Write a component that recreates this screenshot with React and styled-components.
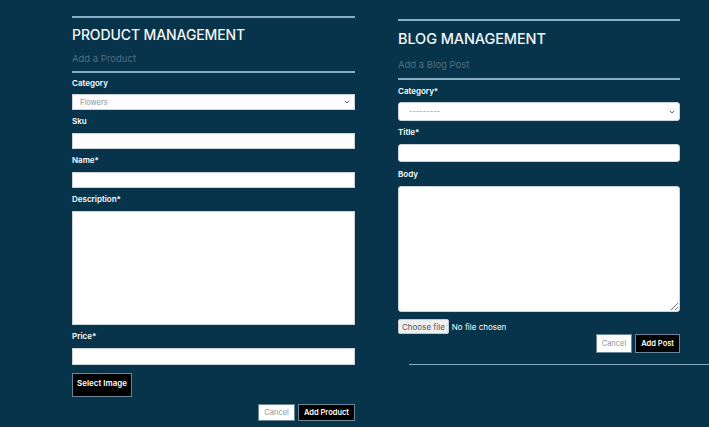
import React from "react";
import styled, { createGlobalStyle } from "styled-components";

const Global = createGlobalStyle`
  html, body { margin: 0; padding: 0; background: #07344a; }
  body { font-family: "Inter", "Noto Sans", sans-serif; color: #fff; }
  * { box-sizing: border-box; }
`;

const Page = styled.div`
  width: 709px;
  height: 427px;
  overflow: hidden;
  background: #07344a;
  display: flex;
  align-items: flex-start;
  gap: 43px;
  padding-left: 72px;
`;

const Column = styled.section`
  width: ${(p) => p.$w}px;
  padding-top: ${(p) => p.$top}px;
  display: flex;
  flex-direction: column;
`;

const Rule = styled.div`
  height: 2px;
  margin-top: ${(p) => p.$mt || 0}px;
  background: #86adc4;
`;

const Heading = styled.h2`
  margin: ${(p) => p.$m};
  font-size: ${(p) => p.$size}px;
  line-height: 20px;
  font-weight: 500;
  letter-spacing: -0.1px;
  color: #f4f7f9;
  text-transform: uppercase;
`;

const Sub = styled.p`
  margin: ${(p) => p.$m};
  font-size: 9.5px;
  line-height: 12px;
  color: #4e6f82;
`;

const Label = styled.label`
  display: block;
  padding: ${(p) => p.$pad || "6px 0 6px"};
  font-size: 8px;
  line-height: 11px;
  font-weight: 600;
  color: #fff;
`;

const Input = styled.input`
  display: block;
  width: 100%;
  height: ${(p) => p.$h}px;
  margin: 0;
  border: 1px solid #c9d3d9;
  border-radius: ${(p) => (p.$round ? "3px" : "0")};
  background: #fff;
  outline: none;
`;

const Area = styled.textarea`
  display: block;
  width: 100%;
  height: ${(p) => p.$h}px;
  margin: 0;
  border: 1px solid #c9d3d9;
  border-radius: ${(p) => (p.$round ? "3px" : "0")};
  background: #fff;
  resize: ${(p) => (p.$round ? "vertical" : "none")};
  outline: none;
`;

const SelectWrap = styled.div`
  position: relative;
  height: ${(p) => p.$h}px;
`;

const Select = styled.select`
  display: block;
  appearance: none;
  width: 100%;
  height: 100%;
  margin: 0;
  padding: 0 0 0 ${(p) => p.$pl}px;
  border: 1px solid #c9d3d9;
  border-radius: ${(p) => (p.$round ? "3px" : "0")};
  background: #fff;
  font-family: inherit;
  font-size: 7.5px;
  color: #8a949a;
  outline: none;
`;

const Chevron = styled.svg`
  position: absolute;
  right: 5px;
  top: 50%;
  margin-top: -2px;
  width: 6px;
  height: 4px;
  pointer-events: none;
`;

const Btn = styled.button`
  font-family: inherit;
  font-size: ${(p) => (p.$small ? 7.5 : 8)}px;
  font-weight: ${(p) => (p.$light ? 400 : 600)};
  height: ${(p) => p.$h}px;
  padding: 0 ${(p) => p.$px}px;
  border: 1px solid #6b8696;
  background: ${(p) => (p.$light ? "#fff" : "#000")};
  color: ${(p) => (p.$light ? "#8f979c" : "#fff")};
  border-radius: 0;
  cursor: pointer;
  line-height: 1;
`;

const SelectImage = styled(Btn)`
  align-self: flex-start;
  width: 60px;
  margin-top: 8px;
  padding: 0;
  display: flex;
  align-items: flex-start;
  justify-content: center;
  padding-top: 5px;
`;

const Actions = styled.div`
  display: flex;
  justify-content: flex-end;
  gap: 3px;
  margin-top: ${(p) => p.$mt}px;
`;

const FileRow = styled.label`
  display: flex;
  align-items: center;
  gap: 3px;
  margin-top: 7px;
  font-size: 8px;
  color: #fff;
  input { display: none; }
`;

const FileButton = styled.span`
  display: inline-flex;
  align-items: center;
  height: 15px;
  padding: 0 3px;
  background: #efefef;
  border: 1px solid #c8c8c8;
  border-radius: 2px;
  color: #555;
  font-size: 8px;
`;

const BottomRule = styled.div`
  height: 1px;
  background: #86adc4;
  margin: 11px -29px 0 11px;
`;

function Chev() {
  return (
    <Chevron viewBox="0 0 6 4">
      <path d="M0.8 0.8 L3 3 L5.2 0.8" fill="none" stroke="#555" strokeWidth="0.9" />
    </Chevron>
  );
}

export default function App() {
  return (
    <>
      <Global />
      <Page>
        <Column $w={283} $top={16}>
          <Rule />
          <Heading $size={14} $m="7px 0 0">Product Management</Heading>
          <Sub $m="8px 0 0">Add a Product</Sub>
          <Rule $mt={6} />
          <Label $pad="5px 0 5px">Category</Label>
          <SelectWrap $h={16}>
            <Select $pl={7} defaultValue="Flowers">
              <option>Flowers</option>
            </Select>
            <Chev />
          </SelectWrap>
          <Label>Sku</Label>
          <Input $h={16} />
          <Label>Name*</Label>
          <Input $h={16} />
          <Label>Description*</Label>
          <Area $h={114} />
          <Label>Price*</Label>
          <Input $h={17} />
          <SelectImage $h={24}>Select Image</SelectImage>
          <Actions $mt={7}>
            <Btn $light $small $h={17} $px={5}>Cancel</Btn>
            <Btn $small $h={17} $px={5}>Add Product</Btn>
          </Actions>
        </Column>
        <Column $w={282} $top={19}>
          <Rule />
          <Heading $size={14.5} $m="8px 0 0">Blog Management</Heading>
          <Sub $m="10px 0 0">Add a Blog Post</Sub>
          <Rule $mt={7} />
          <Label $pad="6px 0 5px">Category*</Label>
          <SelectWrap $h={19}>
            <Select $round $pl={10} defaultValue="---------">
              <option>---------</option>
            </Select>
            <Chev />
          </SelectWrap>
          <Label>Title*</Label>
          <Input $round $h={18} />
          <Label $pad="7px 0 6px">Body</Label>
          <Area $round $h={126} />
          <FileRow>
            <FileButton>Choose file</FileButton>
            <span>No file chosen</span>
            <input type="file" />
          </FileRow>
          <Actions $mt={0}>
            <Btn $light $small $h={19} $px={5}>Cancel</Btn>
            <Btn $small $h={19} $px={5}>Add Post</Btn>
          </Actions>
          <BottomRule />
        </Column>
      </Page>
    </>
  );
}
